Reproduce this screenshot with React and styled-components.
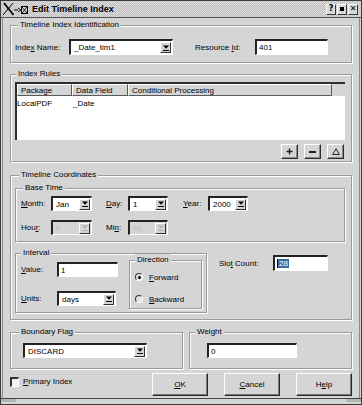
import React from "react";
import styled, { createGlobalStyle } from "styled-components";

const face = "#d5d5d5";
const lite = "#ffffff";
const ink = "#232323";

const GlobalStyle = createGlobalStyle`
  html, body { margin: 0; padding: 0; background: ${face}; }
  body {
    font-family: "Liberation Sans", Arial, sans-serif;
    font-size: 8px;
    color: #000;
  }
  * { box-sizing: border-box; }
`;

const Window = styled.div`
  width: 362px;
  height: 405px;
  border: 1px solid #3c3c3c;
  background: ${face};
  display: flex;
  flex-direction: column;
  overflow: hidden;
`;

const TitleBar = styled.div`
  height: 17px;
  flex: none;
  display: flex;
  align-items: center;
  padding: 0 3px 0 1px;
  border-bottom: 1px solid #555;
  background: repeating-conic-gradient(#bdbdbd 0 25%, #dedede 0 50%) 0 0 / 2px 2px;
`;

const TitleText = styled.span`
  margin-left: 2px;
  font-weight: bold;
  font-size: 9px;
`;

const TitleButtons = styled.div`
  margin-left: auto;
  display: flex;
  gap: 1px;
`;

const TitleButton = styled.div`
  width: 10px;
  height: 11px;
  border: 1px solid;
  border-color: ${lite} #3a3a3a #3a3a3a ${lite};
  background: #d8d8d8;
  display: flex;
  align-items: center;
  justify-content: center;
  font: bold 8px "DejaVu Sans", sans-serif;
  line-height: 1;
`;

const Frame = styled.div`
  flex: 1;
  display: flex;
  flex-direction: column;
  margin: 0 1px;
  border-left: 1px solid #8a8a8a;
  border-right: 1px solid #8a8a8a;
  padding: 1px 7px 0;
`;

const BottomEdge = styled.div`
  height: 6px;
  flex: none;
  border-top: 1px solid #444;
  display: flex;
  justify-content: space-between;
`;

const Grip = styled.div`
  width: 15px;
  height: 3px;
  background: #b4b4b4;
`;

const Group = styled.fieldset`
  margin: ${(p) => p.$m || "0"};
  padding: ${(p) => p.$pad};
  border: 1px solid #9a9a9a;
  box-shadow: inset 1px 1px 0 ${lite}, 1px 1px 0 ${lite};
  min-width: 0;
  width: ${(p) => (p.$w ? `${p.$w}px` : "auto")};
  flex: ${(p) => (p.$grow ? 1 : "none")};
`;

const Legend = styled.legend`
  margin-left: ${(p) => p.$ml || 0}px;
  padding: 0 2px;
  font-size: 8px;
  line-height: 12px;
  background: ${face};
`;

const FieldRow = styled.div`
  display: flex;
  align-items: center;
  height: ${(p) => p.$h || 15}px;
  padding-left: ${(p) => p.$pl || 0}px;
  margin-top: ${(p) => p.$mt || 0}px;
  margin-left: ${(p) => p.$ml || 0}px;
`;

const Label = styled.span`
  flex: none;
  width: ${(p) => p.$w}px;
  margin-left: ${(p) => p.$ml || 0}px;
  white-space: nowrap;
`;

const U = styled.span`
  text-decoration: underline;
`;

const ComboBox = styled.div`
  flex: none;
  width: ${(p) => p.$w}px;
  height: ${(p) => p.$h || 15}px;
  display: flex;
  align-items: center;
  padding-left: 3px;
  background: ${(p) => (p.$disabled ? face : lite)};
  color: ${(p) => (p.$disabled ? "#b9b9b9" : "#000")};
  border-style: solid;
  border-width: 2px 1px 1px 2px;
  border-color: ${ink} ${lite} ${lite} ${ink};
`;

const ComboValue = styled.span`
  flex: 1;
  white-space: nowrap;
  overflow: hidden;
`;

const ArrowButton = styled.span`
  width: 11px;
  height: 11px;
  margin-right: 1px;
  border: 1px solid;
  border-color: ${lite} #2e2e2e #2e2e2e ${lite};
  background: ${face};
  display: flex;
  align-items: center;
  justify-content: center;
`;

const TextField = styled.div`
  flex: none;
  width: ${(p) => p.$w}px;
  height: ${(p) => p.$h || 15}px;
  display: flex;
  align-items: center;
  padding-left: 2px;
  background: ${lite};
  border-style: solid;
  border-width: 2px 1px 1px 2px;
  border-color: ${ink} ${lite} ${lite} ${ink};
  white-space: nowrap;
`;

const Selected = styled.span`
  background: #3b6da5;
  color: #fff;
  padding: 0 1px;
  border-left: 1px solid #000;
`;

const Table = styled.div`
  width: 330px;
  height: 58px;
  border-top: 2px solid #2e2e2e;
  border-left: 2px solid #2e2e2e;
  background: ${lite};
`;

const TableRow = styled.div`
  display: grid;
  grid-template-columns: 55px 56px 204px 1fr;
  height: ${(p) => p.$h}px;
  align-items: center;
  background: ${(p) => (p.$head ? face : "transparent")};
`;

const HeadCell = styled.div`
  height: 100%;
  display: flex;
  align-items: center;
  padding-left: 3px;
  border: 1px solid;
  border-color: ${lite} #5a5a5a #5a5a5a ${lite};
`;

const Cell = styled.div`
  padding-left: ${(p) => p.$pl}px;
`;

const ToolRow = styled.div`
  display: flex;
  justify-content: flex-end;
  gap: 6px;
  margin-top: 4px;
  padding-right: 1px;
`;

const ToolButton = styled.div`
  width: 17px;
  height: 15px;
  border: 1px solid;
  border-color: ${lite} #2e2e2e #2e2e2e ${lite};
  box-shadow: inset -1px -1px 0 #8a8a8a;
  display: flex;
  align-items: center;
  justify-content: center;
`;

const Split = styled.div`
  display: flex;
  align-items: flex-start;
  gap: ${(p) => p.$gap || 0}px;
  margin-top: ${(p) => p.$mt || 0}px;
`;

const Column = styled.div`
  width: ${(p) => p.$w}px;
  padding-top: ${(p) => p.$pt || 0}px;
  flex: none;
`;

const RadioRow = styled.div`
  display: flex;
  align-items: center;
  height: 12px;
  gap: 6px;
  margin-top: ${(p) => p.$mt || 0}px;
`;

const RadioDot = styled.span`
  width: 8px;
  height: 8px;
  border-radius: 50%;
  border: 1px solid;
  border-color: #3a3a3a ${lite} ${lite} #3a3a3a;
  background: #e2e2e2;
  display: flex;
  align-items: center;
  justify-content: center;
  &::after {
    content: "";
    width: 3px;
    height: 3px;
    border-radius: 50%;
    background: ${(p) => (p.$on ? "#000" : "transparent")};
  }
`;

const CheckBox = styled.span`
  width: 9px;
  height: 10px;
  margin-top: 4px;
  border-style: solid;
  border-width: 2px 1px 1px 2px;
  border-color: #333 ${lite} ${lite} #333;
  background: #f2f2f2;
`;

const CheckLabel = styled.span`
  margin: 4px 0 0 4px;
  line-height: 10px;
`;

const Buttons = styled.div`
  margin-left: auto;
  display: flex;
  gap: 16px;
`;

const PushButton = styled.div`
  width: 56px;
  height: 23px;
  border: 1px solid;
  border-color: ${lite} #2a2a2a #2a2a2a ${lite};
  box-shadow: inset -1px -1px 0 #777;
  display: flex;
  align-items: center;
  justify-content: center;
`;

const TitleIcon = () => (
  <svg width="28" height="14" viewBox="0 0 28 14">
    <path d="M2 1 L11.5 13" stroke="#000" strokeWidth="1.8" fill="none" />
    <path d="M11 1 L1 13" stroke="#000" strokeWidth="1" fill="none" />
    <path d="M12 8 H16" stroke="#000" strokeWidth="1" />
    <path d="M16 6 L19 8 L16 10" stroke="#000" strokeWidth="0.9" fill="none" />
    <rect x="19.5" y="4.5" width="6" height="7" fill="none" stroke="#000" />
    <path d="M20 5 L25 11 M25 5 L20 11" stroke="#000" strokeWidth="0.8" />
  </svg>
);

const ArrowIcon = ({ color }) => (
  <svg width="6" height="6" viewBox="0 0 6 6">
    <path d="M0 0.5 H6 L3 3.8 Z" fill={color} />
    <rect x="0" y="5" width="6" height="1" fill={color} />
  </svg>
);

const Combo = ({ w, h, value, disabled }) => (
  <ComboBox $w={w} $h={h} $disabled={disabled}>
    <ComboValue>{value}</ComboValue>
    <ArrowButton>
      <ArrowIcon color={disabled ? "#b3b3b3" : "#000"} />
    </ArrowButton>
  </ComboBox>
);

export default function App() {
  return (
    <>
      <GlobalStyle />
      <Window>
        <TitleBar>
          <TitleIcon />
          <TitleText>Edit Timeline Index</TitleText>
          <TitleButtons>
            <TitleButton>?</TitleButton>
            <TitleButton>
              <svg width="4" height="4">
                <rect width="4" height="4" fill="#000" />
              </svg>
            </TitleButton>
            <TitleButton>✕</TitleButton>
          </TitleButtons>
        </TitleBar>

        <Frame>
          <Group $pad="8px 4px 7px 4px">
            <Legend $ml={3}>Timeline Index Identification</Legend>
            <FieldRow $h={16}>
              <Label $w={54}>
                Inde<U>x</U> Name:
              </Label>
              <Combo w={104} h={16} value="_Date_tim1" />
              <Label $w={60} $ml={22}>
                Resource <U>I</U>d:
              </Label>
              <TextField $w={73} $h={16}>401</TextField>
            </FieldRow>
          </Group>

          <Group $m="5px 0 0" $pad="2px 6px 2px 4px">
            <Legend $ml={1}>Index Rules</Legend>
            <Table>
              <TableRow $h={12} $head>
                <HeadCell>Package</HeadCell>
                <HeadCell>Data Field</HeadCell>
                <HeadCell>Conditional Processing</HeadCell>
              </TableRow>
              <TableRow $h={14}>
                <Cell $pl={0}>LocalPDF</Cell>
                <Cell $pl={1}>_Date</Cell>
              </TableRow>
            </Table>
            <ToolRow>
              <ToolButton>
                <svg width="7" height="7" viewBox="0 0 7 7">
                  <path d="M3.5 0.5 V6.5 M0.5 3.5 H6.5" stroke="#222" strokeWidth="1.4" />
                </svg>
              </ToolButton>
              <ToolButton>
                <svg width="7" height="2">
                  <rect width="7" height="2" fill="#222" />
                </svg>
              </ToolButton>
              <ToolButton>
                <svg width="8" height="7" viewBox="0 0 8 7">
                  <path d="M4 0.8 L7.4 6.5 H0.6 Z" fill="none" stroke="#222" strokeWidth="1" />
                </svg>
              </ToolButton>
            </ToolRow>
          </Group>

          <Group $m="7px 0 0" $pad="1px 6px 6px 4px">
            <Legend $ml={4}>Timeline Coordinates</Legend>
            <Group $pad="2px 6px 6px 5px">
              <Legend $ml={2}>Base Time</Legend>
              <FieldRow>
                <Label $w={30}>
                  <U>M</U>onth:
                </Label>
                <Combo w={41} value="Jan" />
                <Label $w={22} $ml={14}>
                  <U>D</U>ay:
                </Label>
                <Combo w={40} value="1" />
                <Label $w={25} $ml={15}>
                  <U>Y</U>ear:
                </Label>
                <Combo w={40} value="2000" />
              </FieldRow>
              <FieldRow $mt={9}>
                <Label $w={30}>
                  Hou<U>r</U>:
                </Label>
                <Combo w={41} value="0" disabled />
                <Label $w={22} $ml={14}>
                  Mi<U>n</U>:
                </Label>
                <Combo w={40} value="00" disabled />
              </FieldRow>
            </Group>

            <Split $mt={5}>
              <Group $w={192} $pad="0 4px 3px 5px">
                <Legend>Interval</Legend>
                <Split>
                  <Column $w={97} $pt={3}>
                    <FieldRow>
                      <Label $w={36}>
                        <U>V</U>alue:
                      </Label>
                      <TextField $w={61}>1</TextField>
                    </FieldRow>
                    <FieldRow $mt={14}>
                      <Label $w={36}>
                        <U>U</U>nits:
                      </Label>
                      <Combo w={59} value="days" />
                    </FieldRow>
                  </Column>
                  <Group $w={73} $m="-5px 0 0 11px" $pad="5px 4px 3px 5px">
                    <Legend>Direction</Legend>
                    <RadioRow>
                      <RadioDot $on />
                      <span>
                        <U>F</U>orward
                      </span>
                    </RadioRow>
                    <RadioRow $mt={10}>
                      <RadioDot />
                      <span>
                        <U>B</U>ackward
                      </span>
                    </RadioRow>
                  </Group>
                </Split>
              </Group>
              <FieldRow $h={16} $mt={8} $ml={12}>
                <Label $w={54}>
                  Slo<U>t</U> Count:
                </Label>
                <TextField $w={55} $h={16}>
                  <Selected>28</Selected>
                </TextField>
              </FieldRow>
            </Split>
          </Group>

          <Split $mt={6} $gap={6}>
            <Group $w={173} $pad="5px 4px 10px 4px">
              <Legend $ml={4}>
                Boundary Fla<U>g</U>
              </Legend>
              <FieldRow $pl={8}>
                <Combo w={124} value="DISCARD" />
              </FieldRow>
            </Group>
            <Group $grow $pad="5px 4px 10px 4px">
              <Legend $ml={1}>Weight</Legend>
              <FieldRow $pl={13}>
                <TextField $w={90}>0</TextField>
              </FieldRow>
            </Group>
          </Split>

          <Split $mt={4}>
            <CheckBox />
            <CheckLabel>
              <U>P</U>rimary Index
            </CheckLabel>
            <Buttons>
              <PushButton>
                <U>O</U>K
              </PushButton>
              <PushButton>
                <U>C</U>ancel
              </PushButton>
              <PushButton>
                H<U>e</U>lp
              </PushButton>
            </Buttons>
          </Split>
        </Frame>
        <BottomEdge>
          <Grip />
          <Grip />
        </BottomEdge>
      </Window>
    </>
  );
}
